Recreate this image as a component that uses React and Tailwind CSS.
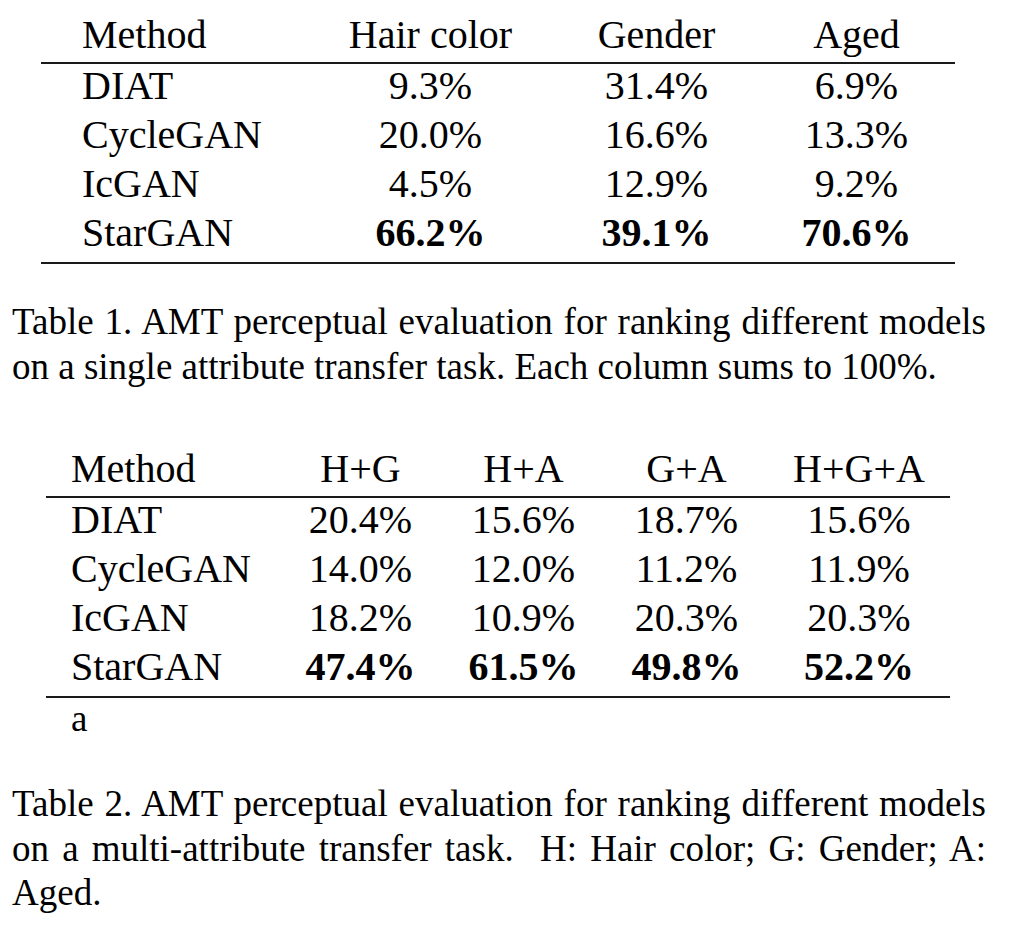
import React from "react";

const t1Head = ["Method", "Hair color", "Gender", "Aged"];
const t1Rows = [
  ["DIAT", "9.3%", "31.4%", "6.9%"],
  ["CycleGAN", "20.0%", "16.6%", "13.3%"],
  ["IcGAN", "4.5%", "12.9%", "9.2%"],
];
const t1Best = ["StarGAN", "66.2%", "39.1%", "70.6%"];

const t2Head = ["Method", "H+G", "H+A", "G+A", "H+G+A"];
const t2Rows = [
  ["DIAT", "20.4%", "15.6%", "18.7%", "15.6%"],
  ["CycleGAN", "14.0%", "12.0%", "11.2%", "11.9%"],
  ["IcGAN", "18.2%", "10.9%", "20.3%", "20.3%"],
];
const t2Best = ["StarGAN", "47.4%", "61.5%", "49.8%", "52.2%"];

function Row({ cells, bold, pad, cols, lead }) {
  return (
    <div className={`grid ${cols} ${lead}`}>
      {cells.map((c, i) => (
        <div
          key={i}
          className={
            i === 0
              ? `${pad} text-left`
              : `text-center ${bold ? "font-bold" : ""}`
          }
        >
          {c}
        </div>
      ))}
    </div>
  );
}

function Table({ head, rows, best, pad, cols, wrap }) {
  return (
    <div className={wrap}>
      <div className="border-b-2 border-[#1a1a1a]">
        <Row cells={head} pad={pad} cols={cols} lead="leading-[54px]" />
      </div>
      <div className="-mt-[3px]">
        {rows.map((r, i) => (
          <Row key={i} cells={r} pad={pad} cols={cols} lead="leading-[49px]" />
        ))}
        <Row cells={best} bold pad={pad} cols={cols} lead="leading-[49px]" />
      </div>
      <div className="mt-[5px] h-[2px] bg-[#1a1a1a]" />
    </div>
  );
}

export default function App() {
  return (
    <div className="w-[1024px] h-[925px] bg-white text-black font-['Liberation_Serif','Times_New_Roman',serif] overflow-hidden">
      <Table
        head={t1Head}
        rows={t1Rows}
        best={t1Best}
        pad="pl-[41px]"
        cols="grid-cols-[265px_249px_203px_197px]"
        wrap="ml-[41px] w-[914px] pt-[8px] text-[40px]"
      />
      <p className="mt-[36px] ml-[12px] w-[974px] text-[37px] leading-[44.5px] text-justify">
        Table 1. AMT perceptual evaluation for ranking different models on a
        single attribute transfer task. Each column sums to 100%.
      </p>
      <Table
        head={t2Head}
        rows={t2Rows}
        best={t2Best}
        pad="pl-[25px]"
        cols="grid-cols-[233px_163px_163px_163px_182px]"
        wrap="ml-[46px] w-[904px] mt-[53px] text-[40px]"
      />
      <div className="ml-[71px] text-[37px] leading-[42px]">a</div>
      <p className="mt-[42px] ml-[12px] w-[974px] text-[37px] leading-[44.5px] text-justify">
        Table 2. AMT perceptual evaluation for ranking different models on a
        multi-attribute transfer task.{"\u00A0"} H: Hair color; G: Gender; A:
        Aged.
      </p>
    </div>
  );
}
